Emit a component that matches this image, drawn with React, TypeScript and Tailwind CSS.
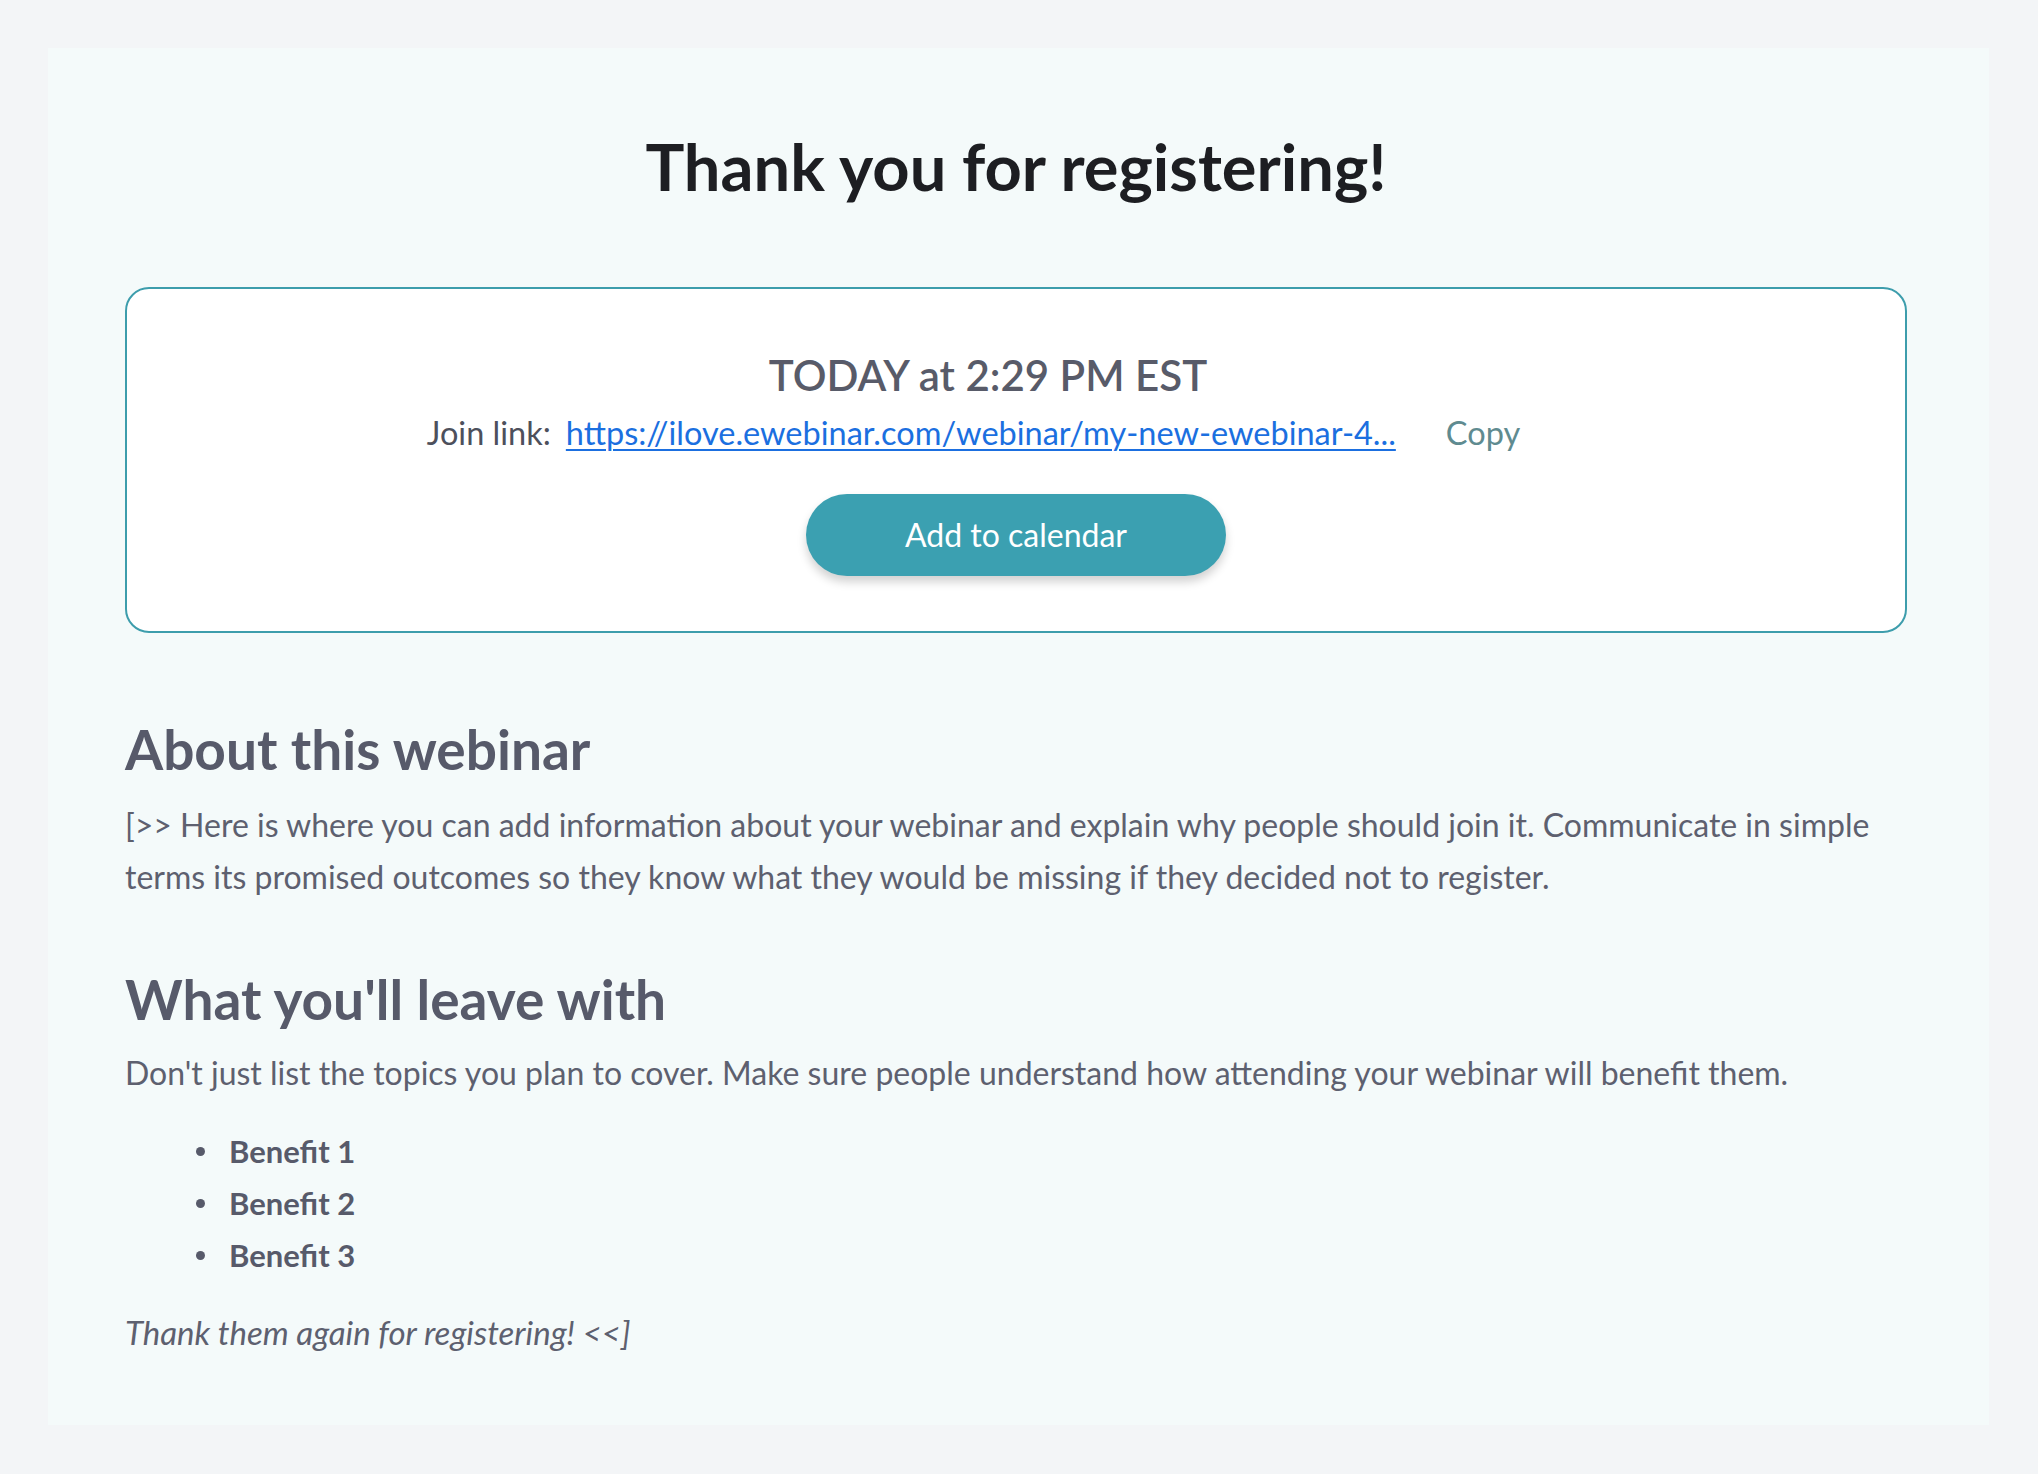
import React from 'react';

const benefits = ['Benefit 1', 'Benefit 2', 'Benefit 3'];

export default function App() {
  return (
    <div
      className="min-h-screen bg-[#f3f5f7] pt-[48px] pb-[49px] pl-[48px] pr-[49px]"
      style={{ fontFamily: 'Lato, "Noto Sans", sans-serif' }}
    >
      <div className="bg-[#f4fafa] pl-[77px] pr-[82px] pt-[83px] pb-[67px]">
        <h1 className="text-center text-[65px] leading-[70px] font-bold text-[#1d1e22]">
          Thank you for registering!
        </h1>

        {/* schedule box */}
        <div className="mt-[86px] rounded-[24px] border-2 border-[#3d9dac] bg-white flex flex-col items-center pt-[63px] pb-[55px]">
          <div className="pr-[56px] text-[42px] leading-[46px] font-semibold text-[#585b69]">
            TODAY at 2:29 PM EST
          </div>
          <div className="mt-[17px] flex items-center text-[32.5px] leading-[36px] pr-[85px]">
            <span className="text-[#4d505c]">Join link:</span>
            <a
              href="#"
              className="ml-[15px] text-[#1b6fe0] underline underline-offset-[4px] decoration-[1.5px]"
            >
              https://ilove.ewebinar.com/webinar/my-new-ewebinar-4...
            </a>
            <button className="ml-[50px] text-[#5f8b90]">Copy</button>
          </div>
          <button className="mt-[43px] w-[420px] h-[82px] rounded-full bg-[#3ba0b1] text-white text-[32px] shadow-[0_6px_10px_rgba(0,0,0,0.18)]">
            Add to calendar
          </button>
        </div>

        <h2 className="mt-[86px] text-[55px] leading-[60px] font-bold text-[#575a6a]">
          About this webinar
        </h2>
        <p className="mt-[20px] text-[32px] leading-[52px] text-[#5d606f]">
          [&gt;&gt; Here is where you can add information about your webinar and explain why people should join it. Communicate in simple terms its promised outcomes so they know what they would be missing if they decided not to register.
        </p>

        <h2 className="mt-[66px] text-[55px] leading-[60px] font-bold text-[#575a6a]">
          What you'll leave with
        </h2>
        <p className="mt-[18px] text-[32px] leading-[52px] text-[#5d606f]">
          Don't just list the topics you plan to cover. Make sure people understand how attending your webinar will benefit them.
        </p>
        <ul className="mt-[26px]">
          {benefits.map((b) => (
            <li key={b} className="flex items-center text-[31px] leading-[52px] font-bold text-[#575a6a]">
              <span className="ml-[71px] mr-[24px] w-[9px] h-[9px] rounded-full bg-[#575a6a]" />
              {b}
            </li>
          ))}
        </ul>
        <p className="mt-[25px] text-[33px] leading-[52px] italic text-[#5d606f]">
          Thank them again for registering! &lt;&lt;]
        </p>
      </div>
    </div>
  );
}
